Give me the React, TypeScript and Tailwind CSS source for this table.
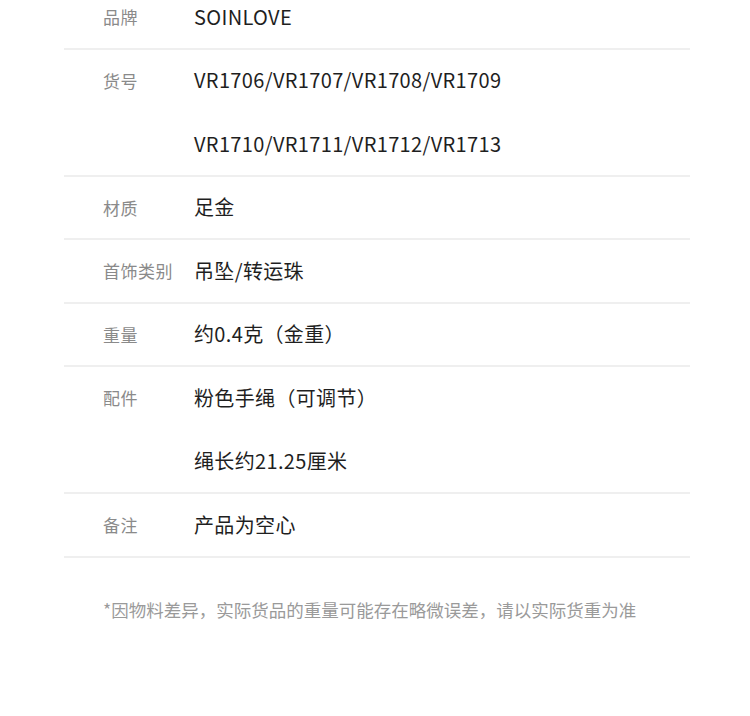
import React from 'react';

const rows = [
  { label: '品牌', values: ['SOINLOVE'] },
  { label: '货号', values: ['VR1706/VR1707/VR1708/VR1709', 'VR1710/VR1711/VR1712/VR1713'] },
  { label: '材质', values: ['足金'] },
  { label: '首饰类别', values: ['吊坠/转运珠'] },
  { label: '重量', values: ['约0.4克（金重）'] },
  { label: '配件', values: ['粉色手绳（可调节）', '绳长约21.25厘米'] },
  { label: '备注', values: ['产品为空心'] },
];

export default function App() {
  return (
    <div
      className="w-[750px] h-[716px] bg-white overflow-hidden"
      style={{ fontFamily: '"Noto Sans CJK SC", "Noto Sans", sans-serif' }}
    >
      <div className="ml-[64px] w-[626px] -mt-[14px]">
        {rows.map((row, i) => (
          <div
            key={i}
            className={`flex border-b-2 border-[#efefef] ${row.values.length > 1 ? 'h-[127px]' : 'h-[63.5px]'}`}
          >
            <div className="w-[130px] pl-[39px] h-[61.5px] flex items-center text-[17px] tracking-[0.5px] text-[#8a8a8a]">
              {row.label}
            </div>
            <div className="flex flex-col justify-between h-full">
              {row.values.map((v, j) => (
                <div key={j} className="h-[61.5px] flex items-center text-[20px] tracking-[0.35px] text-[#1f1f1f]">
                  {v}
                </div>
              ))}
            </div>
          </div>
        ))}
      </div>
      <p className="ml-[103px] mt-[40px] text-[17.5px] leading-[24px] text-[#9a9a9a]">
        *因物料差异，实际货品的重量可能存在略微误差，请以实际货重为准
      </p>
    </div>
  );
}
